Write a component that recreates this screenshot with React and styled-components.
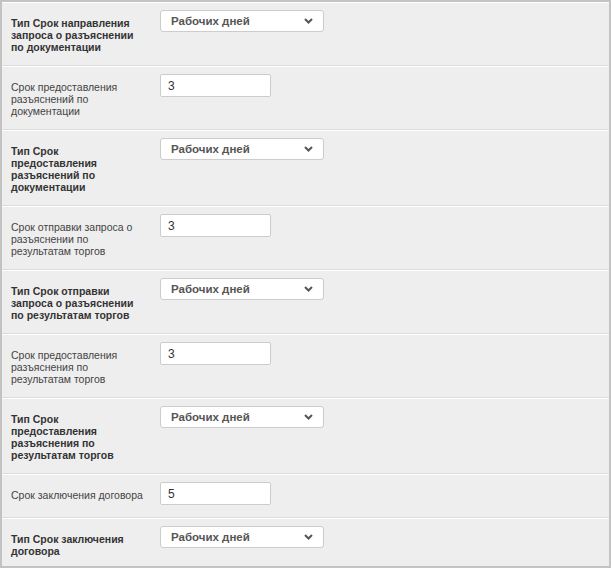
import React from "react";
import styled, { createGlobalStyle } from "styled-components";

const GlobalStyle = createGlobalStyle`
  html, body {
    margin: 0;
    padding: 0;
    background: #ffffff;
  }
  body {
    font-family: "Liberation Sans", Arial, sans-serif;
  }
`;

const Frame = styled.div`
  width: 611px;
  height: 568px;
  box-sizing: border-box;
  border: 2px solid #c3c3c3;
  background: #eeeeee;
  overflow: hidden;
`;

const Row = styled.div`
  display: flex;
  align-items: flex-start;
  padding: 7px 0 12px 9px;
  border-top: 1px solid #ffffff;
  border-bottom: 1px solid #dcdcdc;

  &:last-child {
    border-bottom: none;
  }
`;

const Label = styled.div`
  width: 133px;
  margin-right: 16px;
  padding-top: 7px;
  font-size: 10.5px;
  line-height: 12px;
  font-weight: ${({ $bold }) => ($bold ? 700 : 400)};
  color: ${({ $bold }) => ($bold ? "#333333" : "#444444")};
`;

const SelectBox = styled.div`
  width: 164px;
  height: 22px;
  box-sizing: border-box;
  display: flex;
  align-items: center;
  justify-content: space-between;
  padding: 0 10px 0 10px;
  background: #ffffff;
  border: 1px solid #cccccc;
  border-radius: 3px;
  font-size: 11.5px;
  font-weight: 700;
  color: #555555;
`;

const Input = styled.div`
  width: 111px;
  height: 23px;
  box-sizing: border-box;
  display: flex;
  align-items: center;
  padding: 0 7px;
  background: #ffffff;
  border: 1px solid #cccccc;
  border-radius: 2px;
  font-size: 12px;
  color: #333333;
`;

const Chevron = () => (
  <svg width="9" height="6" viewBox="0 0 9 6">
    <polyline
      points="1,1 4.5,4.5 8,1"
      fill="none"
      stroke="#555555"
      strokeWidth="2"
    />
  </svg>
);

const rows = [
  { label: "Тип Срок направления запроса о разъяснении по документации", type: "select" },
  { label: "Срок предоставления разъяснений по документации", type: "input", value: "3" },
  { label: "Тип Срок предоставления разъяснений по документации", type: "select" },
  { label: "Срок отправки запроса о разъяснении по результатам торгов", type: "input", value: "3" },
  { label: "Тип Срок отправки запроса о разъяснении по результатам торгов", type: "select" },
  { label: "Срок предоставления разъяснения по результатам торгов", type: "input", value: "3" },
  { label: "Тип Срок предоставления разъяснения по результатам торгов", type: "select" },
  { label: "Срок заключения договора", type: "input", value: "5" },
  { label: "Тип Срок заключения договора", type: "select" },
];

const App = () => {
  return (
    <>
      <GlobalStyle />
      <Frame>
        {rows.map((r, i) => (
          <Row key={i}>
            <Label $bold={r.type === "select"}>{r.label}</Label>
            {r.type === "select" ? (
              <SelectBox>
                Рабочих дней
                <Chevron />
              </SelectBox>
            ) : (
              <Input>{r.value}</Input>
            )}
          </Row>
        ))}
      </Frame>
    </>
  );
};

export default App;
